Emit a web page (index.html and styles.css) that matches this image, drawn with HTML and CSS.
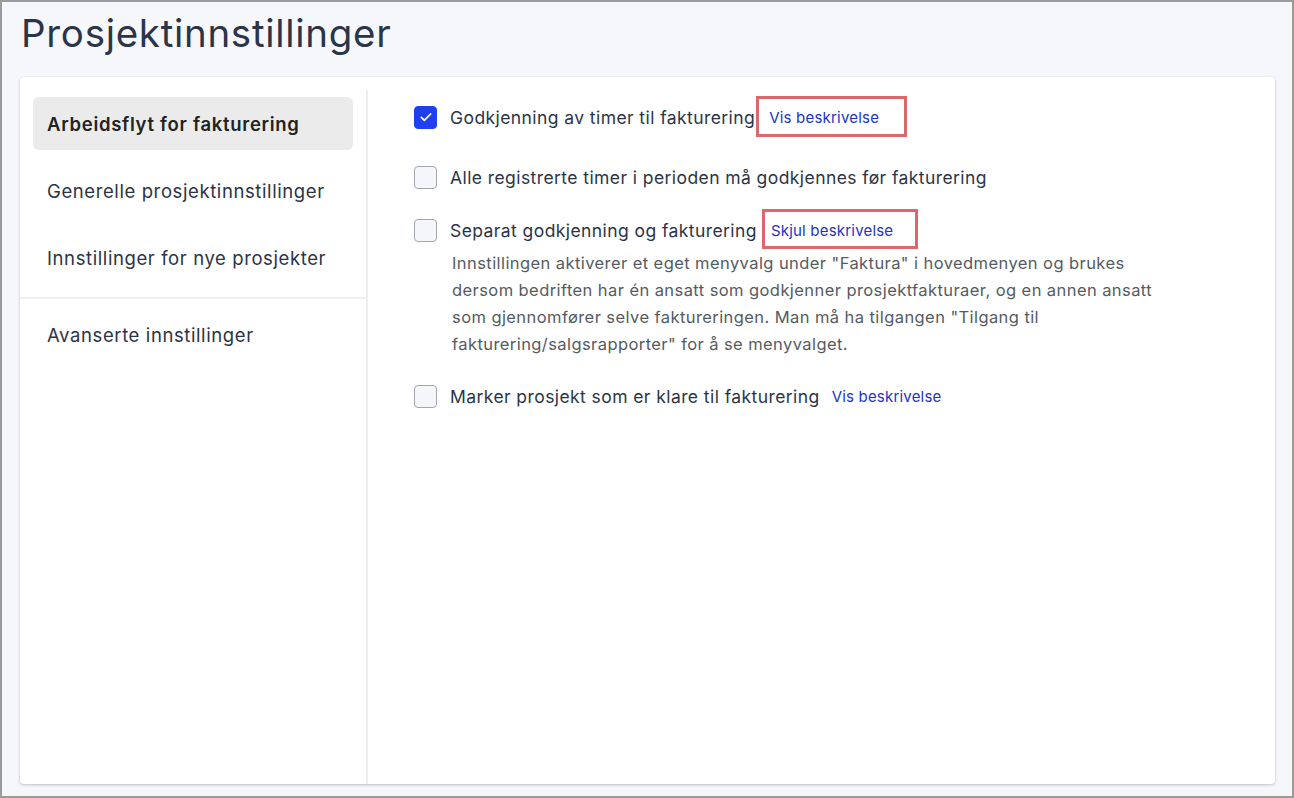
FILE: index.html
```html
<!DOCTYPE html>
<html lang="no">
<head>
<meta charset="utf-8">
<title>Prosjektinnstillinger</title>
<link rel="stylesheet" href="styles.css">
</head>
<body>
<div class="page">
  <h1 class="title">Prosjektinnstillinger</h1>
  <div class="card">
    <nav class="sidebar">
      <div class="nav-item active">Arbeidsflyt for fakturering</div>
      <div class="nav-item">Generelle prosjektinnstillinger</div>
      <div class="nav-item">Innstillinger for nye prosjekter</div>
      <div class="nav-divider"></div>
      <div class="nav-item nav-item-after">Avanserte innstillinger</div>
    </nav>
    <main class="content">
      <div class="setting setting-first">
        <div class="row">
          <span class="checkbox checked">
            <svg viewBox="0 0 24 24" width="16" height="16"><path d="M5 12.5l4.5 4.5L19 7.5" fill="none" stroke="#fff" stroke-width="2.6" stroke-linecap="round" stroke-linejoin="round"/></svg>
          </span>
          <span class="label">Godkjenning av timer til fakturering</span>
          <span class="mark mark-a"><a class="link">Vis beskrivelse</a></span>
        </div>
      </div>
      <div class="setting">
        <div class="row">
          <span class="checkbox"></span>
          <span class="label">Alle registrerte timer i perioden må godkjennes før fakturering</span>
        </div>
      </div>
      <div class="setting">
        <div class="row">
          <span class="checkbox"></span>
          <span class="label">Separat godkjenning og fakturering</span>
          <span class="mark mark-b"><a class="link">Skjul beskrivelse</a></span>
        </div>
        <p class="desc">Innstillingen aktiverer et eget menyvalg under "Faktura" i hovedmenyen og brukes dersom bedriften har én ansatt som godkjenner prosjektfakturaer, og en annen ansatt som gjennomfører selve faktureringen. Man må ha tilgangen "Tilgang til fakturering/salgsrapporter" for å se menyvalget.</p>
      </div>
      <div class="setting">
        <div class="row">
          <span class="checkbox"></span>
          <span class="label">Marker prosjekt som er klare til fakturering</span>
          <a class="link link-plain">Vis beskrivelse</a>
        </div>
      </div>
    </main>
  </div>
</div>
</body>
</html>
```

FILE: styles.css
```css
* { box-sizing: border-box; }
html, body { margin: 0; padding: 0; }
body {
  font-family: Inter, "Noto Sans", sans-serif;
  color: #2b3447;
}
.page {
  width: 1294px;
  height: 798px;
  border: 2px solid #9b9b9b;
  background: #f6f7fb;
  display: flex;
  flex-direction: column;
}
.title {
  margin: 0;
  padding: 8px 0 0 19px;
  height: 75px;
  font-size: 38.5px;
  font-weight: 400;
  line-height: 46px;
  color: #2b3549;
  letter-spacing: 0.7px;
}
.card {
  flex: 1;
  margin: 0 17px 12px 18px;
  background: #fff;
  border-radius: 4px;
  box-shadow: 0 1px 3px rgba(40, 45, 70, 0.28);
  display: flex;
}
.sidebar {
  width: 348px;
  flex: none;
  margin-top: 13px;
  padding: 7px 13px 0 13px;
  border-right: 2px solid #eeeeee;
}
.nav-item {
  height: 53px;
  display: flex;
  align-items: center;
  padding-left: 14px;
  margin-bottom: 14px;
  font-size: 18.5px;
  letter-spacing: 0.6px;
  color: #2b3447;
  border-radius: 6px;
}
.nav-item.active {
  background: #ebebeb;
  font-weight: 600;
  letter-spacing: 0.7px;
  color: #222;
}
.nav-divider {
  height: 2px;
  background: #efefef;
  margin: -1px -15px 9px -13px;
}
.content {
  flex: 1;
  padding: 25px 0 0 46px;
}
.setting { margin-bottom: 23px; }
.setting-first { margin-bottom: 30px; }
.row {
  display: flex;
  align-items: center;
  height: 30px;
}
.checkbox {
  width: 23px;
  height: 23px;
  flex: none;
  border: 1.5px solid #a2a6b1;
  border-radius: 4px;
  background: #f5f6fa;
  display: flex;
  align-items: center;
  justify-content: center;
}
.checkbox.checked {
  background: #1f3ff0;
  border-color: #1f3ff0;
}
.label {
  margin-left: 13px;
  font-size: 17.5px;
  letter-spacing: 0.42px;
  color: #2b3447;
}
.link {
  margin-left: 14px;
  font-size: 15px;
  letter-spacing: 0.2px;
  color: #1a34c8;
  cursor: pointer;
}
.link-plain { margin-left: 12px; }
.mark { position: relative; display: inline-flex; }
.mark::after {
  content: "";
  position: absolute;
  border: 3px solid #dc676d;
  pointer-events: none;
}
.mark-a::after { top: -12px; bottom: -10px; left: 1px; right: -28px; }
.mark-b::after { top: -12px; bottom: -9px; left: 5px; right: -25px; }
.desc {
  margin: 5px 0 0 38px;
  max-width: 708px;
  font-size: 16.5px;
  letter-spacing: 0.42px;
  line-height: 27px;
  color: #555b62;
}
```
